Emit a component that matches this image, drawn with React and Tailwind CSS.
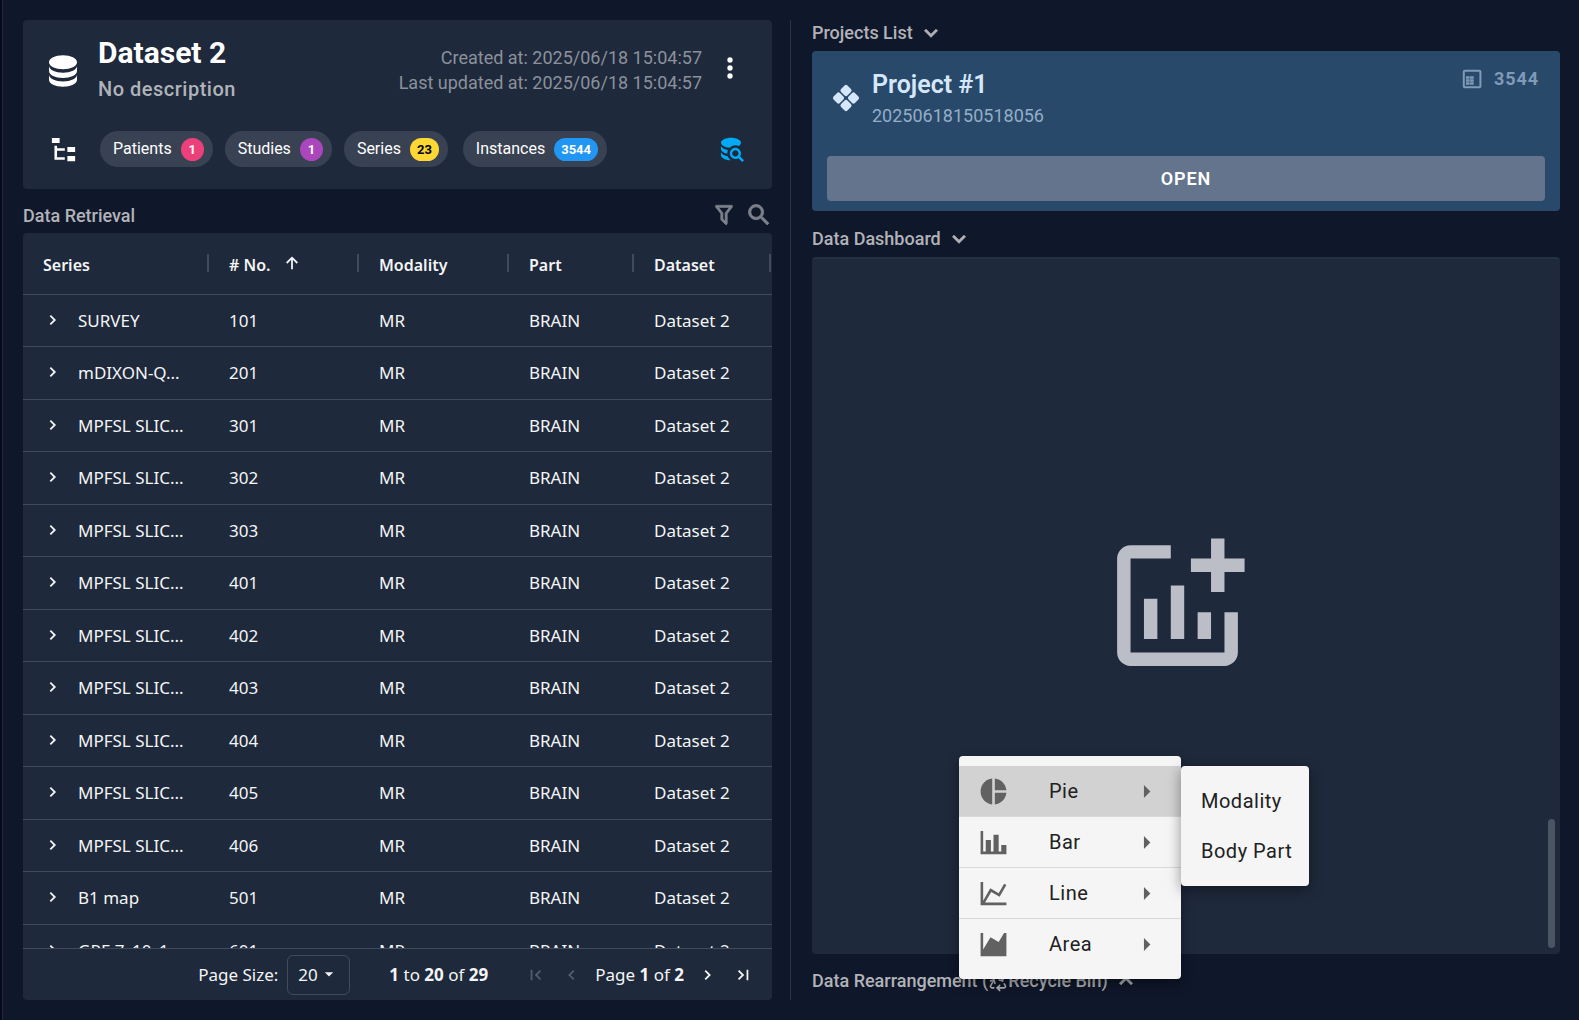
import { MdPieChart, MdAddchart } from "react-icons/md";
import { Recycle } from "lucide-react";

const roboto = "font-['Roboto',sans-serif]";

const Icon = ({ d, size = 24, bold = 0, className = "" }) => (
  <svg width={size} height={size} viewBox="0 0 24 24" fill="currentColor" stroke={bold ? "currentColor" : "none"} strokeWidth={bold} className={`shrink-0 ${className}`} aria-hidden="true">
    <path d={d} />
  </svg>
);

const paths = {
  database:
    "M12,3C7.58,3 4,4.79 4,7C4,9.21 7.58,11 12,11C16.42,11 20,9.21 20,7C20,4.79 16.42,3 12,3M4,9V12C4,14.21 7.58,16 12,16C16.42,16 20,14.21 20,12V9C20,11.21 16.42,13 12,13C7.58,13 4,11.21 4,9M4,14V17C4,19.21 7.58,21 12,21C16.42,21 20,19.21 20,17V14C20,16.21 16.42,18 12,18C7.58,18 4,16.21 4,14Z",
  search:
    "M18.68,12.32C16.92,10.56 14.07,10.57 12.32,12.33C10.56,14.09 10.56,16.94 12.32,18.69C13.81,20.17 16.11,20.43 17.89,19.32L21,22.39L22.39,21L19.3,17.89C20.43,16.12 20.17,13.8 18.68,12.32M17.27,17.27C16.29,18.25 14.71,18.24 13.73,17.27C12.76,16.29 12.76,14.71 13.74,13.73C14.71,12.76 16.29,12.76 17.27,13.73C18.24,14.71 18.24,16.29 17.27,17.27M10.9,20.1C10.25,19.44 9.74,18.65 9.42,17.78C6.27,17.25 4,15.76 4,14V17C4,19.21 7.58,21 12,21V21C11.6,20.74 11.23,20.44 10.9,20.1M4,9V12C4,13.68 6.07,15.12 9,15.7C9,15.63 9,15.57 9,15.5C9,14.57 9.2,13.65 9.58,12.81C6.34,12.3 4,10.79 4,9M12,3C7.58,3 4,4.79 4,7C4,9 7,10.68 10.85,11H10.9C12.1,9.74 13.76,9 15.5,9C16.41,9 17.31,9.19 18.14,9.56C19.17,9.09 19.87,8.12 20,7C20,4.79 16.42,3 12,3Z",
  tree: "M3,3H9V7H3V3M15,10H21V14H15V10M15,17H21V21H15V17M13,13H7V18H13V20H7L5,20V9H7V11H13V13Z",
  dots: "M12,16A2,2 0 0,1 14,18A2,2 0 0,1 12,20A2,2 0 0,1 10,18A2,2 0 0,1 12,16M12,10A2,2 0 0,1 14,12A2,2 0 0,1 12,14A2,2 0 0,1 10,12A2,2 0 0,1 12,10M12,4A2,2 0 0,1 14,6A2,2 0 0,1 12,8A2,2 0 0,1 10,6A2,2 0 0,1 12,4Z",
  filter:
    "M15,19.88C15.04,20.18 14.94,20.5 14.71,20.71C14.32,21.1 13.69,21.1 13.3,20.71L9.29,16.7C9.06,16.47 8.96,16.16 9,15.87V10.75L4.21,4.62C3.87,4.19 3.95,3.56 4.38,3.22C4.57,3.08 4.78,3 5,3H19C19.22,3 19.43,3.08 19.62,3.22C20.05,3.56 20.13,4.19 19.79,4.62L15,10.75V19.88M7.04,5L11,10.06V15.58L13,17.58V10.05L16.96,5H7.04Z",
  magnify:
    "M9.5,3A6.5,6.5 0 0,1 16,9.5C16,11.11 15.41,12.59 14.44,13.73L14.71,14H15.5L20.5,19L19,20.5L14,15.5V14.71L13.73,14.44C12.59,15.41 11.11,16 9.5,16A6.5,6.5 0 0,1 3,9.5A6.5,6.5 0 0,1 9.5,3M9.5,5C7,5 5,7 5,9.5C5,12 7,14 9.5,14C12,14 14,12 14,9.5C14,7 12,5 9.5,5Z",
  down: "M7.41,8.58L12,13.17L16.59,8.58L18,10L12,16L6,10L7.41,8.58Z",
  up: "M7.41,15.41L12,10.83L16.59,15.41L18,14L12,8L6,14L7.41,15.41Z",
  menuRight: "M10,17L15,12L10,7V17Z",
  caret: "M7,10L12,15L17,10H7Z",
  bar: "M22,21H2V3H4V19H6V10H10V19H12V6H16V19H18V14H22V21Z",
  line: "M16,11.78L20.24,4.45L21.97,5.45L16.74,14.5L10.23,10.75L5.46,19H22V21H2V3H4V17.54L9.5,8L16,11.78Z",
  area: "M2,21V3H4V15.8L9.7,6.3L16,10L20.2,3H22V21Z",
};

const Stroke = ({ d, w = 2, size = 18, className = "" }) => (
  <svg width={size} height={size} viewBox="0 0 18 18" fill="none" stroke="currentColor" strokeWidth={w} className={`shrink-0 ${className}`} aria-hidden="true">
    <path d={d} />
  </svg>
);

const series = [
  ["SURVEY", 101],
  ["mDIXON-Q...", 201],
  ["MPFSL SLIC...", 301],
  ["MPFSL SLIC...", 302],
  ["MPFSL SLIC...", 303],
  ["MPFSL SLIC...", 401],
  ["MPFSL SLIC...", 402],
  ["MPFSL SLIC...", 403],
  ["MPFSL SLIC...", 404],
  ["MPFSL SLIC...", 405],
  ["MPFSL SLIC...", 406],
  ["B1 map", 501],
  ["GRE 7_10_1", 601],
];

const chips = [
  ["Patients", "1", "bg-[#ec407a] text-white min-w-[23px] px-1", "mr-3"],
  ["Studies", "1", "bg-[#ab47bc] text-white min-w-[23px] px-1", "mr-3"],
  ["Series", "23", "bg-[#fdd835] text-black px-[7px]", "mr-[15px]"],
  ["Instances", "3544", "bg-[#2196f3] text-white px-[7px]", ""],
];

function DatasetCard() {
  return (
    <section className="h-[169px] shrink-0 rounded-[4px] bg-[#1e293b] px-[22px] pt-3">
      <div className="flex h-[78px] items-start">
        <Icon d={paths.database} size={42} className="-ml-[3px] mt-[18px] text-white" />
        <div className="ml-[14px] flex-1">
          <h1 className="text-[30px] leading-[42px] font-bold text-white">Dataset 2</h1>
          <p className="text-[20px] leading-[30px] font-medium tracking-wide text-[#b0b3ba]">No description</p>
        </div>
        <div className="pt-[13px] text-right text-[18px] leading-[25px] text-[#8b919b]">
          <p>Created at: 2025/06/18 15:04:57</p>
          <p>Last updated at: 2025/06/18 15:04:57</p>
        </div>
        <button aria-label="Dataset options" className="mr-1 ml-3 mt-5 text-white">
          <Icon d={paths.dots} size={32} />
        </button>
      </div>
      <div className="mt-[21px] flex h-9 items-center">
        <button aria-label="Show tree" className="ml-[3px] text-white">
          <Icon d={paths.tree} size={31} />
        </button>
        <div className="ml-[21px] flex">
          {chips.map(([label, count, badge, gap]) => (
            <button key={label} className={`flex h-9 items-center gap-[9px] rounded-full bg-[#394253] pr-[9px] pl-[13px] text-[16px] text-white ${gap}`}>
              <span>{label}</span>
              <span className={`mt-px flex h-[23px] items-center justify-center rounded-full text-[13px] font-bold ${badge}`}>{count}</span>
            </button>
          ))}
        </div>
        <button aria-label="Search dataset" className="mr-1 ml-auto text-[#03a9f4]">
          <Icon d={paths.search} size={30} />
        </button>
      </div>
    </section>
  );
}

function Th({ children, last }) {
  return (
    <th scope="col" className="p-0 text-left font-semibold">
      <div className="flex h-[61px] items-center pl-[20px] text-[16px]">
        <span className="flex items-center pt-0.5">{children}</span>
        <span className={`mb-0.5 ml-auto h-[18px] w-0.5 bg-[#414b5a] ${last ? "mr-px" : ""}`} />
      </div>
    </th>
  );
}

function DataTable() {
  return (
    <section className="flex min-h-0 flex-1 flex-col overflow-hidden rounded-[4px] bg-[#1e293b] font-['Noto_Sans',sans-serif] text-[17px] text-[#f4f5f6]">
      <div className="min-h-0 flex-1 overflow-hidden">
        <table className="w-full table-fixed border-collapse">
          <colgroup>
            <col className="w-[186px]" />
            <col className="w-[150px]" />
            <col className="w-[150px]" />
            <col className="w-[125px]" />
            <col />
          </colgroup>
          <thead>
            <tr className="border-b border-[#414b5a]">
              <Th>Series</Th>
              <Th>
                # No.
                <Stroke d="M9 16V3M3 9L9 3L15 9" size={16} className="mb-1 ml-[14px]" />
              </Th>
              <Th>Modality</Th>
              <Th>Part</Th>
              <Th last>Dataset</Th>
            </tr>
          </thead>
          <tbody>
            {series.map(([name, no]) => (
              <tr key={no} className="h-[52px] border-b border-[#414b5a] last:border-0 even:h-[53px]">
                <td className="p-0">
                  <div className="flex items-center pl-[22px] whitespace-nowrap">
                    <button aria-label={`Expand series ${no}`} className="mb-0.5">
                      <Stroke d="M6 4L11 9L6 14" size={16} />
                    </button>
                    <span className="ml-[17px]">{name}</span>
                  </div>
                </td>
                <td className="p-0 pl-[20px]">{no}</td>
                <td className="p-0 pl-[20px]">MR</td>
                <td className="p-0 pl-[20px]">BRAIN</td>
                <td className="p-0 pl-[20px] whitespace-nowrap">Dataset 2</td>
              </tr>
            ))}
          </tbody>
        </table>
      </div>
      <footer className="flex h-[52px] shrink-0 items-center justify-end border-t border-[#414b5a] pr-[21px]">
        <label htmlFor="page-size">Page Size:</label>
        <div className="relative ml-[9px]">
          <select id="page-size" defaultValue="20" className="block h-10 w-[63px] appearance-none rounded-[6px] border border-[#414b5a] bg-transparent pl-[10px]">
            <option>20</option>
            <option>50</option>
          </select>
          <Icon d={paths.caret} size={20} className="pointer-events-none absolute top-[9px] right-[11px]" />
        </div>
        <p className="ml-[39px]">
          <b>1</b> to <b>20</b> of <b>29</b>
        </p>
        <button disabled aria-label="First page" className="ml-[40px] text-[#535d6b]">
          <Stroke d="M4 3V15M14 4L9 9L14 14" size={16} />
        </button>
        <button disabled aria-label="Previous page" className="ml-[20px] text-[#535d6b]">
          <Stroke d="M11 4L6 9L11 14" size={16} />
        </button>
        <p className="ml-[15px]">
          Page <b>1</b> of <b>2</b>
        </p>
        <button aria-label="Next page" className="ml-[15px]">
          <Stroke d="M7 4L12 9L7 14" size={16} />
        </button>
        <button aria-label="Last page" className="ml-[20px]">
          <Stroke d="M4 4L9 9L4 14M14 3V15" size={16} />
        </button>
      </footer>
    </section>
  );
}

function ProjectCard() {
  return (
    <section className="flex h-[160px] shrink-0 flex-col rounded-[4px] bg-[#29496a] px-[15px] pb-[10px]">
      <div className="flex flex-1 items-start">
        <svg width="28" height="28" viewBox="0 0 28 28" fill="#d5e8fb" className="mt-[33px] ml-[5px] shrink-0" aria-hidden="true">
          <g transform="rotate(45 14 14)">
            <rect x="4.2" y="4.2" width="9" height="9" rx="2" />
            <rect x="14.8" y="4.2" width="9" height="9" rx="2" />
            <rect x="4.2" y="14.8" width="9" height="9" rx="2" />
            <rect x="14.8" y="14.8" width="9" height="9" rx="2" />
          </g>
        </svg>
        <div className="ml-[12px] pt-[18px]">
          <h2 className="text-[25px] leading-8 font-semibold text-[#d5e8fb]">Project #1</h2>
          <p className="text-[18px] leading-[30px] text-[#93aec8]">20250618150518056</p>
        </div>
        <div className="mt-[14px] mr-[6px] ml-auto flex items-center gap-[12px] text-[18px] font-bold tracking-wider text-[#7f9bb8]">
          <svg width="20" height="20" viewBox="0 0 20 20" fill="none" aria-hidden="true">
            <rect x="1.8" y="1.8" width="16.6" height="16.4" rx="1" stroke="currentColor" strokeWidth="2" />
            <path d="M4 8.500h8M4 11.500h8M4 14.500h8" stroke="currentColor" strokeWidth="2.400" strokeDasharray="3.600 .5" />
          </svg>
          <span>3544</span>
        </div>
      </div>
      <button className="h-[45px] rounded-[4px] bg-[#64748d] text-[18px] font-semibold tracking-wider text-white">OPEN</button>
    </section>
  );
}

const sectionTitle = "flex items-center text-left text-[18px] leading-6 font-medium text-[#b2b3b8]";

const chartTypes = [
  ["Pie", <MdPieChart size={31} />],
  ["Bar", <Icon d={paths.bar} size={31} />],
  ["Line", <Icon d={paths.line} size={31} />],
  ["Area", <Icon d={paths.area} size={31} />],
];

function ChartMenu() {
  return (
    <div className="absolute top-[497px] left-[147px] z-10 flex items-start text-[20px] tracking-wide text-[#212121]">
      <ul role="menu" className="w-[222px] rounded-[4px] bg-[#f5f5f5] py-[10px] shadow-[0_5px_12px_rgba(0,0,0,0.4)]">
        {chartTypes.map(([label, icon], i) => (
          <li key={label} role="none" className={i < 3 ? "border-b border-[#d9d9d9]" : ""}>
            <button role="menuitem" className={`flex h-[50px] w-full items-center pr-[19px] pl-[19px] ${i === 0 ? "bg-[#d2d2d2]" : ""}`}>
              <span className="text-[#616161]">{icon}</span>
              <span className="ml-[40px]">{label}</span>
              <Icon d={paths.menuRight} className="ml-auto size-[31px] text-[#616161]" />
            </button>
          </li>
        ))}
      </ul>
      <ul role="menu" className="mt-[10px] w-[128px] rounded-[4px] bg-[#f5f5f5] py-[10px] shadow-[0_4px_14px_rgba(0,0,0,0.4)]">
        {["Modality", "Body Part"].map((t) => (
          <li key={t} role="none">
            <button role="menuitem" className="h-[50px] w-full pl-5 text-left whitespace-nowrap">
              {t}
            </button>
          </li>
        ))}
      </ul>
    </div>
  );
}

export default function App() {
  return (
    <div className={`flex h-screen border-l-2 border-[#060a1c] bg-[#0f172a] ${roboto}`}>
      <main className="grid min-w-0 flex-1 grid-cols-[minmax(0,768fr)_minmax(0,769fr)] border-l border-[#1e2638] py-5 pr-[19px] pl-5">
        <div className="flex min-h-0 min-w-0 flex-col border-r border-[#2c3446] pr-[18px]">
          <DatasetCard />
          <div className="flex h-[44px] shrink-0 items-center pt-2">
            <h2 className={`${sectionTitle} flex-1 pt-px`}>Data Retrieval</h2>
            <button aria-label="Filter" className="text-[#7c818b]">
              <Icon d={paths.filter} size={26} bold={0.6} />
            </button>
            <button aria-label="Search" className="-mr-px ml-[8px] text-[#7c818b]">
              <Icon d={paths.magnify} size={28} bold={0.7} />
            </button>
          </div>
          <DataTable />
        </div>
        <div className="flex min-h-0 min-w-0 flex-col pl-[21px]">
          <div className="h-[31px] shrink-0">
            <button className={sectionTitle}>
              Projects List
              <Icon d={paths.down} size={26} bold={0.8} className="ml-[5px]" />
            </button>
          </div>
          <ProjectCard />
          <div className="h-[46px] shrink-0 pt-[15px]">
            <button className={sectionTitle}>
              Data Dashboard
              <Icon d={paths.down} size={26} bold={0.8} className="ml-[5px]" />
            </button>
          </div>
          <section className="relative flex min-h-0 flex-1 items-center justify-center rounded-[4px] border-t-2 border-[#223145] bg-[#1e293b] pr-[18px] pb-0.5">
            <button aria-label="Add chart" className="text-[#bbbec6]">
              <MdAddchart size={161} />
            </button>
            <ChartMenu />
            <span className="absolute right-[5px] bottom-[6px] h-[129px] w-[7px] rounded-full bg-[#4b5462]" />
          </section>
          <div className="h-[46px] shrink-0 pt-[14px]">
            <button className={sectionTitle}>
              Data Rearrangement (<Recycle size={20} strokeWidth={2} className="mt-0.5" />
              Recycle Bin)
              <Icon d={paths.up} size={26} bold={0.8} className="ml-[5px]" />
            </button>
          </div>
        </div>
      </main>
    </div>
  );
}
